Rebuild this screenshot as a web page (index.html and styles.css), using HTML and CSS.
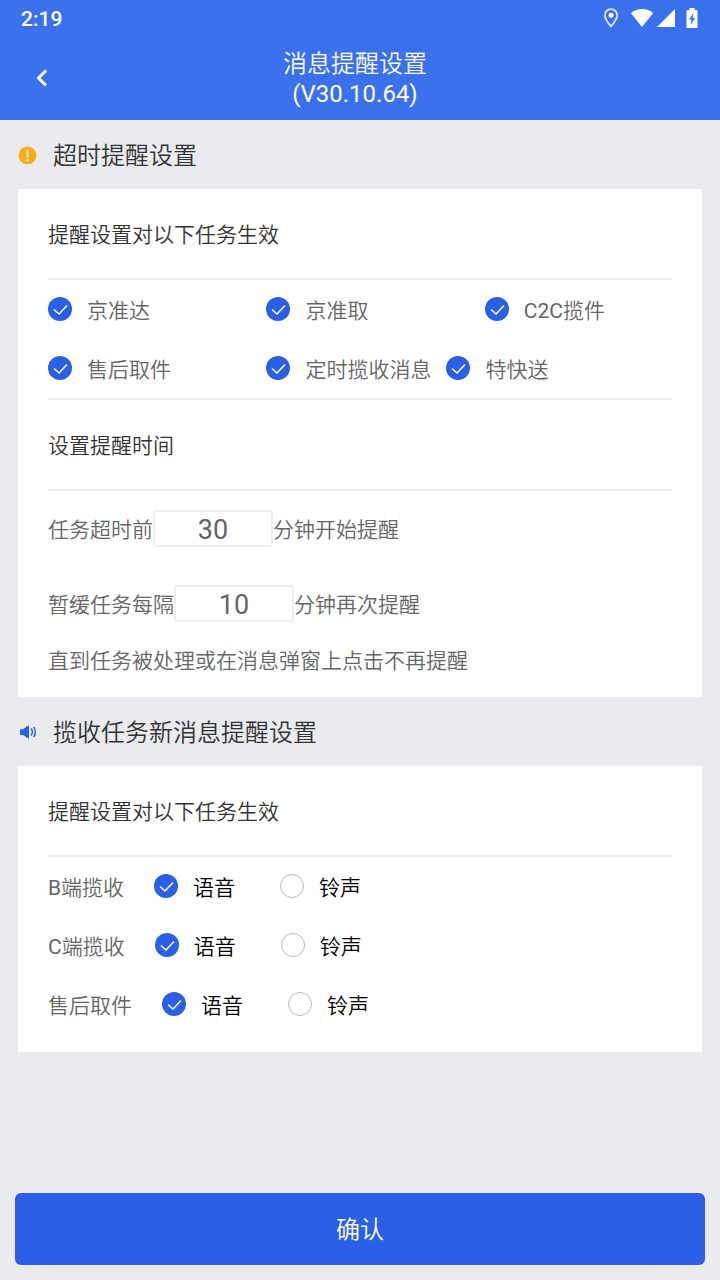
FILE: index.html
```html
<!DOCTYPE html>
<html lang="zh-CN">
<head>
<meta charset="utf-8">
<meta name="viewport" content="width=device-width, initial-scale=1">
<title>消息提醒设置</title>
<link rel="stylesheet" href="styles.css">
</head>
<body>
<div class="app">
  <header class="top">
    <div class="status">
      <span class="status-time">2:19</span>
      <span class="status-icons">
        <svg width="16" height="20" viewBox="0 0 16 20"><path d="M8 1.200C4.300 1.200 1.900 4 1.900 7.200C1.900 11.500 8 18.300 8 18.300S14.100 11.500 14.100 7.200C14.100 4 11.700 1.200 8 1.200Z" fill="none" stroke="#fff" stroke-opacity=".85" stroke-width="1.800"/><circle cx="8" cy="7.200" r="2.500" fill="#fff"/></svg>
        <svg class="wifi" width="24" height="20" viewBox="0 0 24 20"><path d="M1 5.200C4 2.400 8 1 12 1S20 2.400 23 5.200L12 19Z" fill="#fff"/></svg>
        <svg class="signal" width="18" height="18" viewBox="0 0 18 18"><path d="M18 0V18H0Z" fill="#fff"/></svg>
        <svg class="battery" width="12" height="20" viewBox="0 0 12 20"><path d="M3.500 0H8.500V2H10.500Q11.500 2 11.500 3V19Q11.500 20 10.500 20H1.500Q.5 20 .5 19V3Q.5 2 1.500 2H3.500Z" fill="#fff"/><path d="M7.500 5L3 11.500H5.500L4.800 17L9.200 9.800H6.600Z" fill="#3b70ee"/></svg>
      </span>
    </div>
    <div class="nav">
      <button class="back" type="button" aria-label="返回">
        <svg width="12" height="18" viewBox="0 0 12 18"><path d="M10 1.500L2.500 9L10 16.500" fill="none" stroke="#fff" stroke-width="3"/></svg>
      </button>
      <h1 class="title">消息提醒设置<br><span class="latin">(V30.10.64)</span></h1>
    </div>
  </header>

  <main class="content">
    <h2 class="section">
      <svg class="section-icon" width="20" height="20" viewBox="0 0 20 20"><circle cx="9.500" cy="10.500" r="9" fill="#fbad17"/><path d="M8.500 5H10.500L10 12.800H9Z" fill="#fff"/><circle cx="9.500" cy="15.200" r="1.300" fill="#fff"/></svg>
      超时提醒设置
    </h2>
    <section class="card">
      <h3 class="card-title">提醒设置对以下任务生效</h3>
      <div class="options">
        <div class="row">
          <label class="option"><input class="check" type="checkbox" checked>京准达</label>
          <label class="option"><input class="check" type="checkbox" checked>京准取</label>
          <label class="option"><input class="check" type="checkbox" checked><span><span class="latin">C2C</span>揽件</span></label>
        </div>
        <div class="row">
          <label class="option"><input class="check" type="checkbox" checked>售后取件</label>
          <label class="option option-fit"><input class="check" type="checkbox" checked>定时揽收消息</label>
          <label class="option"><input class="check" type="checkbox" checked>特快送</label>
        </div>
      </div>
      <h3 class="card-title">设置提醒时间</h3>
      <div class="field"><label class="field-text" for="before">任务超时前</label><input class="minutes" id="before" type="text" inputmode="numeric" value="30"><span class="field-text">分钟开始提醒</span></div>
      <div class="field"><label class="field-text" for="every">暂缓任务每隔</label><input class="minutes" id="every" type="text" inputmode="numeric" value="10"><span class="field-text">分钟再次提醒</span></div>
      <p class="note">直到任务被处理或在消息弹窗上点击不再提醒</p>
    </section>

    <h2 class="section">
      <svg class="section-icon" width="20" height="20" viewBox="0 0 20 20"><path d="M2 7.200H5L11 3V17L5 13H2Z" fill="#2a5fe6"/><path d="M13.200 6.500Q15.500 10 13.200 13.500M15.700 4.800Q19 10 15.700 15.200" fill="none" stroke="#2a5fe6" stroke-width="1.500"/></svg>
      揽收任务新消息提醒设置
    </h2>
    <section class="card card-modes">
      <h3 class="card-title">提醒设置对以下任务生效</h3>
      <div class="row modes" role="radiogroup" aria-labelledby="mode-b">
        <span id="mode-b"><span class="latin">B</span>端揽收</span>
        <label class="mode"><input class="check" type="radio" name="b" checked>语音</label>
        <label class="mode"><input class="check" type="radio" name="b">铃声</label>
      </div>
      <div class="row modes" role="radiogroup" aria-labelledby="mode-c">
        <span id="mode-c"><span class="latin">C</span>端揽收</span>
        <label class="mode"><input class="check" type="radio" name="c" checked>语音</label>
        <label class="mode"><input class="check" type="radio" name="c">铃声</label>
      </div>
      <div class="row modes" role="radiogroup" aria-labelledby="mode-s">
        <span id="mode-s">售后取件</span>
        <label class="mode"><input class="check" type="radio" name="s" checked>语音</label>
        <label class="mode"><input class="check" type="radio" name="s">铃声</label>
      </div>
    </section>
  </main>

  <footer class="footer"><button class="confirm" type="button">确认</button></footer>
</div>
</body>
</html>
```
FILE: styles.css
```css
* { box-sizing: border-box; }

body {
  margin: 0;
  background: #e9ebef;
  color: #666;
  font: 350 21px/30px Roboto, "Noto Sans CJK SC", sans-serif;
}

h1, h2, h3, p { margin: 0; font-weight: inherit; }

svg { display: block; flex: none; }

.latin { font-weight: 400; }

.app {
  display: flex;
  flex-direction: column;
  min-height: 100vh;
}

.top {
  background: #3b70ee;
  color: #fff;
}

.status {
  display: flex;
  align-items: center;
  justify-content: space-between;
  height: 36px;
  padding: 0 22px 0 21px;
}

.status-time { padding-top: 2px; font-size: 21px; font-weight: 500; }

.status-icons { display: flex; align-items: center; }
.wifi { margin-left: 11px; }
.signal { margin-left: 3px; }
.battery { margin-left: 11px; }

.nav {
  display: grid;
  grid-template-columns: 84px 1fr 94px;
  align-items: center;
  height: 84px;
}

.back {
  display: flex;
  justify-content: center;
  padding: 12px;
  border: 0;
  background: none;
}

.title {
  padding-top: 2px;
  font-size: 24px;
  line-height: 30px;
  text-align: center;
}

.content {
  flex: 1;
  padding: 0 18px;
}

.section {
  display: flex;
  align-items: center;
  gap: 15px;
  height: 69px;
  padding-top: 2px;
  color: #333;
  font-size: 24px;
}

.section-icon { margin-bottom: 2px; }

.card {
  padding: 0 30px 20px;
  background: #fff;
}

.card-modes { padding-bottom: 18px; }

.card-title {
  padding: 31px 0 28px;
  border-bottom: 2px solid #efefef;
  color: #333;
  font-size: 21px;
}

.options { border-bottom: 2px solid #efefef; }

.row {
  display: flex;
  align-items: center;
  height: 59px;
  padding-top: 2px;
}

.option {
  display: flex;
  align-items: center;
  gap: 15px;
  width: 35%;
}

.option:last-child { width: auto; }

.option-fit {
  width: auto;
  padding-right: 15px;
}

.check {
  flex: none;
  width: 24px;
  height: 24px;
  margin: 0 0 4px;
  border: 1px solid #bbb;
  border-radius: 50%;
  appearance: none;
  background: #fff;
}

.check:checked {
  border: 0;
  background: #2a5fe6 url("data:image/svg+xml,%3Csvg xmlns='http://www.w3.org/2000/svg' viewBox='0 0 24 24'%3E%3Cpath d='M6 12.500L11 17L19 8.500' fill='none' stroke='white' stroke-width='1.500'/%3E%3C/svg%3E");
}

.field {
  display: flex;
  align-items: center;
  height: 75px;
}

.field-text { padding-top: 2px; }

.minutes {
  width: 120px;
  height: 37px;
  padding: 2px 0 0;
  border: 2px solid #efefef;
  border-radius: 3px;
  color: #666;
  font: 27px/31px Roboto, sans-serif;
  text-align: center;
}

.note { padding: 5px 0 1px; }

.modes { gap: 30px; }

.mode {
  display: flex;
  align-items: center;
  gap: 15px;
  padding-right: 15px;
  color: #000;
}

.footer { padding: 15px; }

.confirm {
  width: 100%;
  height: 72px;
  padding: 2px 0 0;
  border: 0;
  border-radius: 6px;
  background: #2a5fe6;
  color: #fff;
  font: inherit;
  font-size: 24px;
}
```
